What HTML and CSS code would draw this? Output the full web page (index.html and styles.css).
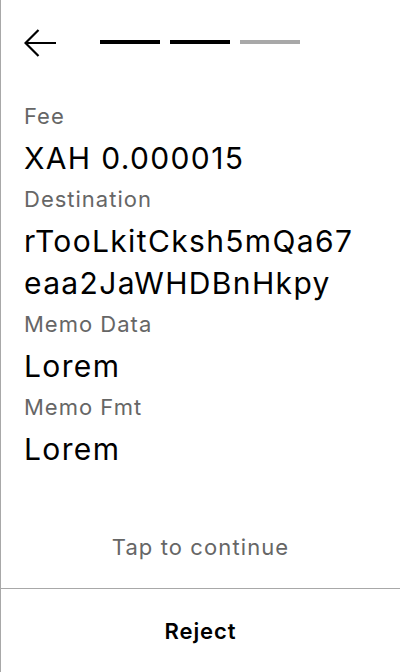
FILE: index.html
```html
<!DOCTYPE html>
<html>
<head>
<meta charset="utf-8">
<link rel="stylesheet" href="styles.css">
</head>
<body>
<div class="screen">
  <div class="top">
    <svg class="back" width="34" height="30" viewBox="0 0 34 30">
      <path d="M32 15H2M14.5 2L1.5 15L14.5 28" fill="none" stroke="#000" stroke-width="2.2"/>
    </svg>
    <div class="steps">
      <span class="step on"></span>
      <span class="step on"></span>
      <span class="step"></span>
    </div>
  </div>
  <div class="fields">
    <div class="label">Fee</div>
    <div class="value">XAH 0.000015</div>
    <div class="label">Destination</div>
    <div class="value">rTooLkitCksh5mQa67<br>eaa2JaWHDBnHkpy</div>
    <div class="label">Memo Data</div>
    <div class="value">Lorem</div>
    <div class="label">Memo Fmt</div>
    <div class="value">Lorem</div>
  </div>
  <div class="tap">Tap to continue</div>
  <div class="reject">Reject</div>
</div>
</body>
</html>
```
FILE: styles.css
```css
html, body {
  margin: 0;
  padding: 0;
  background: #fff;
}
body {
  font-family: Inter, "Noto Sans", sans-serif;
  color: #000;
}
.screen {
  width: 399px;
  height: 672px;
  border-left: 1px solid #a8a8a8;
  display: flex;
  flex-direction: column;
}
.top {
  display: flex;
  align-items: center;
  height: 86px;
  padding-left: 23px;
}
.back {
  display: block;
}
.steps {
  display: flex;
  gap: 10px;
  margin-left: 42px;
  margin-top: -2px;
}
.step {
  width: 60px;
  height: 4px;
  background: #a8a8a8;
}
.step.on {
  background: #000;
}
.fields {
  padding-left: 23px;
  margin-top: 16px;
}
.label {
  font-size: 22px;
  line-height: 28px;
  letter-spacing: 1px;
  color: #666;
}
.value {
  font-size: 30px;
  line-height: 42px;
  letter-spacing: 1.35px;
  margin-top: 7px;
  margin-bottom: 6px;
}
.tap {
  margin-top: auto;
  text-align: center;
  font-size: 22px;
  line-height: 28px;
  letter-spacing: 1.1px;
  color: #666;
  margin-bottom: 27px;
}
.reject {
  border-top: 1px solid #a8a8a8;
  height: 83px;
  display: flex;
  align-items: center;
  justify-content: center;
  font-size: 22px;
  font-weight: 600;
  letter-spacing: 0.9px;
}
```
